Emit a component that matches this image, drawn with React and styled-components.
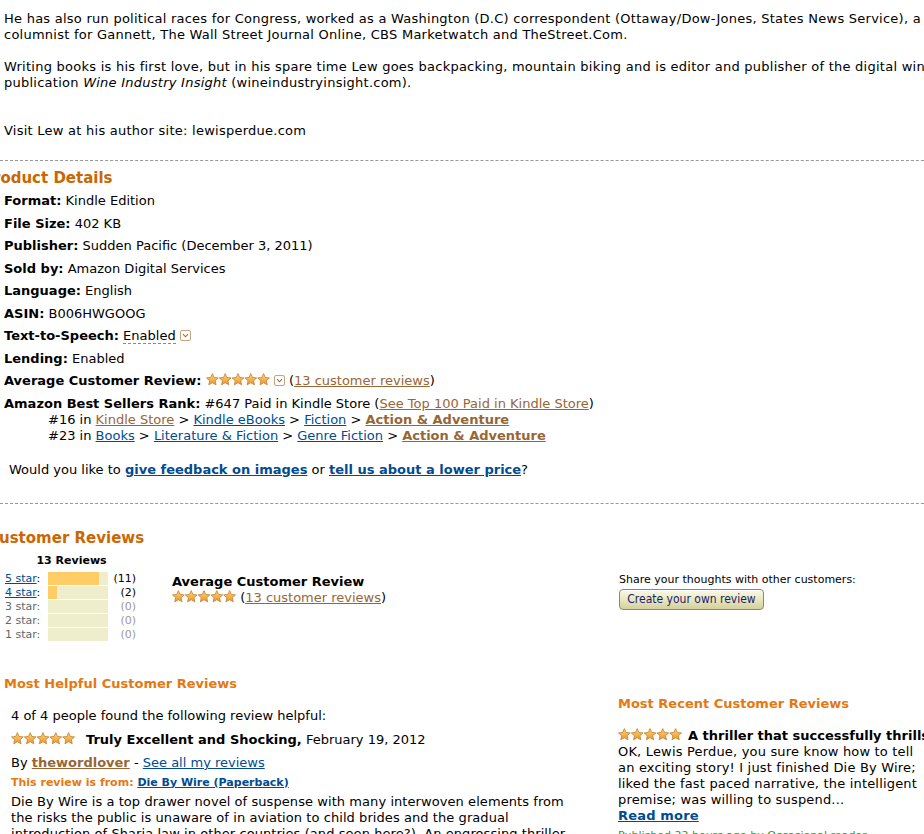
import styled, { createGlobalStyle } from 'styled-components';

const GlobalStyle = createGlobalStyle`
  html, body {
    margin: 0;
    padding: 0;
    background: #fff;
    overflow: hidden;
  }
  body {
    font-family: "DejaVu Sans", Verdana, sans-serif;
    font-size: 13px;
    color: #000;
  }
`;

function starPoints(cx, cy, R, r) {
  const pts = [];
  for (let i = 0; i < 10; i++) {
    const a = ((-90 + i * 36) * Math.PI) / 180;
    const rad = i % 2 === 0 ? R : r;
    pts.push(`${(cx + rad * Math.cos(a)).toFixed(2)},${(cy + rad * Math.sin(a)).toFixed(2)}`);
  }
  return pts.join(' ');
}

function Stars() {
  return (
    <StarSvg width="64" height="13" viewBox="0 0 64 13">
      <defs>
        <linearGradient id="starFill" x1="0" y1="0" x2="0" y2="1">
          <stop offset="0" stopColor="#FFD37C" />
          <stop offset="1" stopColor="#E99530" />
        </linearGradient>
      </defs>
      {[0, 1, 2, 3, 4].map((i) => (
        <polygon
          key={i}
          points={starPoints(6.4 + i * 12.8, 6.8, 6.2, 2.9)}
          fill="url(#starFill)"
          stroke="#C3812C"
          strokeWidth="0.8"
          strokeLinejoin="round"
        />
      ))}
    </StarSvg>
  );
}

function DropIcon() {
  return (
    <DropSvg width="11" height="11" viewBox="0 0 11 11">
      <rect x="0.5" y="0.5" width="10" height="10" rx="1.5" fill="#fff" stroke="#C9A37B" />
      <path d="M3 4.2 L5.5 6.8 L8 4.2" fill="none" stroke="#9A6B3A" strokeWidth="1.1" />
    </DropSvg>
  );
}

const histogram = [
  { label: '5 star', count: 11, link: true },
  { label: '4 star', count: 2, link: true },
  { label: '3 star', count: 0 },
  { label: '2 star', count: 0 },
  { label: '1 star', count: 0 },
];

export default function App() {
  return (
    <>
      <GlobalStyle />
      <Page>
        <Para>
          He has also run political races for Congress, worked as a Washington (D.C) correspondent (Ottaway/Dow-Jones, States News Service), a
          <br />
          columnist for Gannett, The Wall Street Journal Online, CBS Marketwatch and TheStreet.Com.
        </Para>
        <Para $gap={32}>
          Writing books is his first love, but in his spare time Lew goes backpacking, mountain biking and is editor and publisher of the digital wine trade
          <br />
          publication <i>Wine Industry Insight</i> (wineindustryinsight.com).
        </Para>
        <Para $gap={0}>Visit Lew at his author site: lewisperdue.com</Para>

        <Divider $top={21} />
        <SectionTitle $top={7} $left={-22}>Product Details</SectionTitle>

        <DetailList>
          <DetailRow><b>Format:</b> Kindle Edition</DetailRow>
          <DetailRow><b>File Size:</b> 402 KB</DetailRow>
          <DetailRow><b>Publisher:</b> Sudden Pacific (December 3, 2011)</DetailRow>
          <DetailRow><b>Sold by:</b> Amazon Digital Services</DetailRow>
          <DetailRow><b>Language:</b> English</DetailRow>
          <DetailRow><b>ASIN:</b> B006HWGOOG</DetailRow>
          <DetailRow>
            <b>Text-to-Speech:</b> <Dashed>Enabled</Dashed> <DropIcon />
          </DetailRow>
          <DetailRow><b>Lending:</b> Enabled</DetailRow>
          <DetailRow>
            <b>Average Customer Review:</b> <Stars /> <DropIcon /> (<BrownLink href="#">13 customer reviews</BrownLink>)
          </DetailRow>
          <DetailRow>
            <b>Amazon Best Sellers Rank:</b> #647 Paid in Kindle Store (<BrownLink href="#">See Top 100 Paid in Kindle Store</BrownLink>)
            <RankList>
              <li>
                #16 in <BrownLink href="#">Kindle Store</BrownLink> &gt; <BlueLink href="#">Kindle eBooks</BlueLink> &gt;{' '}
                <BlueLink href="#">Fiction</BlueLink> &gt; <BrownLink href="#" $bold>Action &amp; Adventure</BrownLink>
              </li>
              <li>
                #23 in <BlueLink href="#">Books</BlueLink> &gt; <BlueLink href="#">Literature &amp; Fiction</BlueLink> &gt;{' '}
                <BlueLink href="#">Genre Fiction</BlueLink> &gt; <BrownLink href="#" $bold>Action &amp; Adventure</BrownLink>
              </li>
            </RankList>
          </DetailRow>
        </DetailList>

        <Feedback>
          Would you like to <BlueLink href="#" $bold>give feedback on images</BlueLink> or{' '}
          <BlueLink href="#" $bold>tell us about a lower price</BlueLink>?
        </Feedback>

        <Divider $top={25} />
        <SectionTitle $top={24} $left={-16}>Customer Reviews</SectionTitle>

        <SummaryRow>
          <Histogram>
            <HistTitle>13 Reviews</HistTitle>
            {histogram.map((h) => (
              <HistRow key={h.label}>
                <HistLabel $active={h.link}>
                  {h.link ? <BlueLink href="#">{h.label}</BlueLink> : h.label}:
                </HistLabel>
                <Bar>
                  <BarFill style={{ width: `${(h.count / 13) * 100}%` }} />
                </Bar>
                <HistCount $active={h.count > 0}>({h.count})</HistCount>
              </HistRow>
            ))}
          </Histogram>

          <AverageBox>
            <AverageTitle>Average Customer Review</AverageTitle>
            <div>
              <Stars /> (<BrownLink href="#">13 customer reviews</BrownLink>)
            </div>
          </AverageBox>

          <ShareBox>
            <SmallText>Share your thoughts with other customers:</SmallText>
            <ReviewButton>Create your own review</ReviewButton>
          </ShareBox>
        </SummaryRow>

        <ReviewsRow>
          <HelpfulColumn>
            <SubTitle>Most Helpful Customer Reviews</SubTitle>
            <Review>
              <Line $top={16}>4 of 4 people found the following review helpful:</Line>
              <Line $top={8}>
                <Stars />
                <TitleGap $w={11} />
                <b>Truly Excellent and Shocking,</b> February 19, 2012
              </Line>
              <Line $top={7}>
                By <BrownLink href="#" $bold>thewordlover</BrownLink> - <BlueLink href="#">See all my reviews</BlueLink>
              </Line>
              <FromLine>
                This review is from: <BlueLink href="#" $bold>Die By Wire (Paperback)</BlueLink>
              </FromLine>
              <Line $top={4} $spacing={0.07}>
                Die By Wire is a top drawer novel of suspense with many interwoven elements from
                <br />
                the risks the public is unaware of in aviation to child brides and the gradual
                <br />
                introduction of Sharia law in other countries (and seen here?). An engrossing thriller
              </Line>
            </Review>
          </HelpfulColumn>

          <RecentColumn>
            <SubTitle>Most Recent Customer Reviews</SubTitle>
            <Line $top={16}>
              <Stars />
              <TitleGap $w={6} />
              <b>A thriller that successfully thrills</b>
            </Line>
            <Line $spacing={0.18}>
              OK, Lewis Perdue, you sure know how to tell
              <br />
              an exciting story! I just finished Die By Wire;
              <br />
              liked the fast paced narrative, the intelligent
              <br />
              premise; was willing to suspend...
              <br />
              <BlueLink href="#" $bold>Read more</BlueLink>
            </Line>
            <Published>Published 22 hours ago by Occasional reader</Published>
          </RecentColumn>
        </ReviewsRow>
      </Page>
    </>
  );
}

const Page = styled.div`
  width: 1000px;
  padding: 11px 0 0 4px;
`;

const Para = styled.p`
  margin: 0 0 ${(p) => (p.$gap ?? 16)}px;
  line-height: 16px;
  letter-spacing: 0.25px;
  white-space: nowrap;
`;

const Divider = styled.hr`
  border: 0;
  border-top: 1px dashed #999;
  height: 0;
  margin: ${(p) => p.$top}px 0 0 -4px;
`;

const SectionTitle = styled.h2`
  margin: ${(p) => p.$top}px 0 0 ${(p) => p.$left}px;
  font-size: 15px;
  line-height: 20px;
  font-weight: bold;
  color: #cc6600;
  white-space: nowrap;
`;

const DetailList = styled.ul`
  list-style: none;
  margin: 5px 0 0;
  padding: 0;
`;

const DetailRow = styled.li`
  line-height: 16px;
  margin-bottom: 6.5px;
  white-space: nowrap;
`;

const RankList = styled.ul`
  list-style: none;
  margin: 0;
  padding: 0 0 0 44px;
`;

const Dashed = styled.span`
  border-bottom: 1px dashed #888;
`;

const StarSvg = styled.svg`
  display: inline-block;
  vertical-align: -1px;
`;

const DropSvg = styled.svg`
  display: inline-block;
  vertical-align: -1px;
`;

const BlueLink = styled.a`
  color: #004b91;
  text-decoration: underline;
  font-weight: ${(p) => (p.$bold ? 'bold' : 'normal')};
`;

const BrownLink = styled.a`
  color: #996633;
  text-decoration: underline;
  font-weight: ${(p) => (p.$bold ? 'bold' : 'normal')};
`;

const Feedback = styled.div`
  margin-top: 18px;
  padding-left: 5px;
  line-height: 16px;
`;

const SummaryRow = styled.div`
  display: flex;
  margin-top: 6px;
`;

const Histogram = styled.div`
  width: 133px;
  padding-left: 1px;
  font-size: 11px;
`;

const HistTitle = styled.div`
  font-weight: bold;
  text-align: center;
  line-height: 14px;
  margin-bottom: 4px;
`;

const HistRow = styled.div`
  display: grid;
  grid-template-columns: 43px 60px 28px;
  align-items: center;
  height: 14px;
`;

const HistLabel = styled.span`
  color: ${(p) => (p.$active ? '#000' : '#666')};
  line-height: 14px;
`;

const Bar = styled.div`
  height: 13px;
  background: #eeeecc;
`;

const BarFill = styled.div`
  height: 100%;
  background: #ffcc66;
`;

const HistCount = styled.span`
  text-align: right;
  color: ${(p) => (p.$active ? '#000' : '#999')};
`;

const AverageBox = styled.div`
  width: 447px;
  margin-left: 34px;
  padding-top: 20px;
  line-height: 16px;
`;

const AverageTitle = styled.div`
  font-weight: bold;
`;

const ShareBox = styled.div`
  padding-top: 19px;
`;

const SmallText = styled.div`
  font-size: 11px;
  line-height: 14px;
`;

const ReviewButton = styled.button`
  display: block;
  margin-top: 2px;
  width: 145px;
  height: 21px;
  padding: 0;
  border: 1px solid #8d8a5e;
  border-radius: 4px;
  background: linear-gradient(#fbfae6, #e9e7c0 50%, #d4d19c);
  box-shadow: inset 0 1px 0 #fff;
  color: #1c1c6b;
  font-family: "DejaVu Sans Condensed", "DejaVu Sans", sans-serif;
  font-stretch: condensed;
  font-size: 12px;
  white-space: nowrap;
  cursor: pointer;
`;

const ReviewsRow = styled.div`
  display: flex;
  margin-top: 34px;
`;

const HelpfulColumn = styled.div`
  width: 614px;
  flex-shrink: 0;
`;

const RecentColumn = styled.div`
  padding-top: 20px;
  white-space: nowrap;
`;

const SubTitle = styled.div`
  font-weight: bold;
  color: #e47911;
  line-height: 16px;
`;

const Review = styled.div`
  padding-left: 7px;
`;

const Line = styled.div`
  margin-top: ${(p) => p.$top || 0}px;
  line-height: 16px;
  letter-spacing: ${(p) => (p.$spacing ? `${p.$spacing}px` : 'normal')};
  white-space: nowrap;
`;

const TitleGap = styled.span`
  display: inline-block;
  width: ${(p) => p.$w}px;
`;

const FromLine = styled.div`
  margin-top: 5px;
  font-size: 11px;
  font-weight: bold;
  line-height: 14px;
  color: #e47911;
`;

const Published = styled.div`
  margin-top: 5px;
  font-size: 11px;
  line-height: 14px;
  color: #339933;
`;
